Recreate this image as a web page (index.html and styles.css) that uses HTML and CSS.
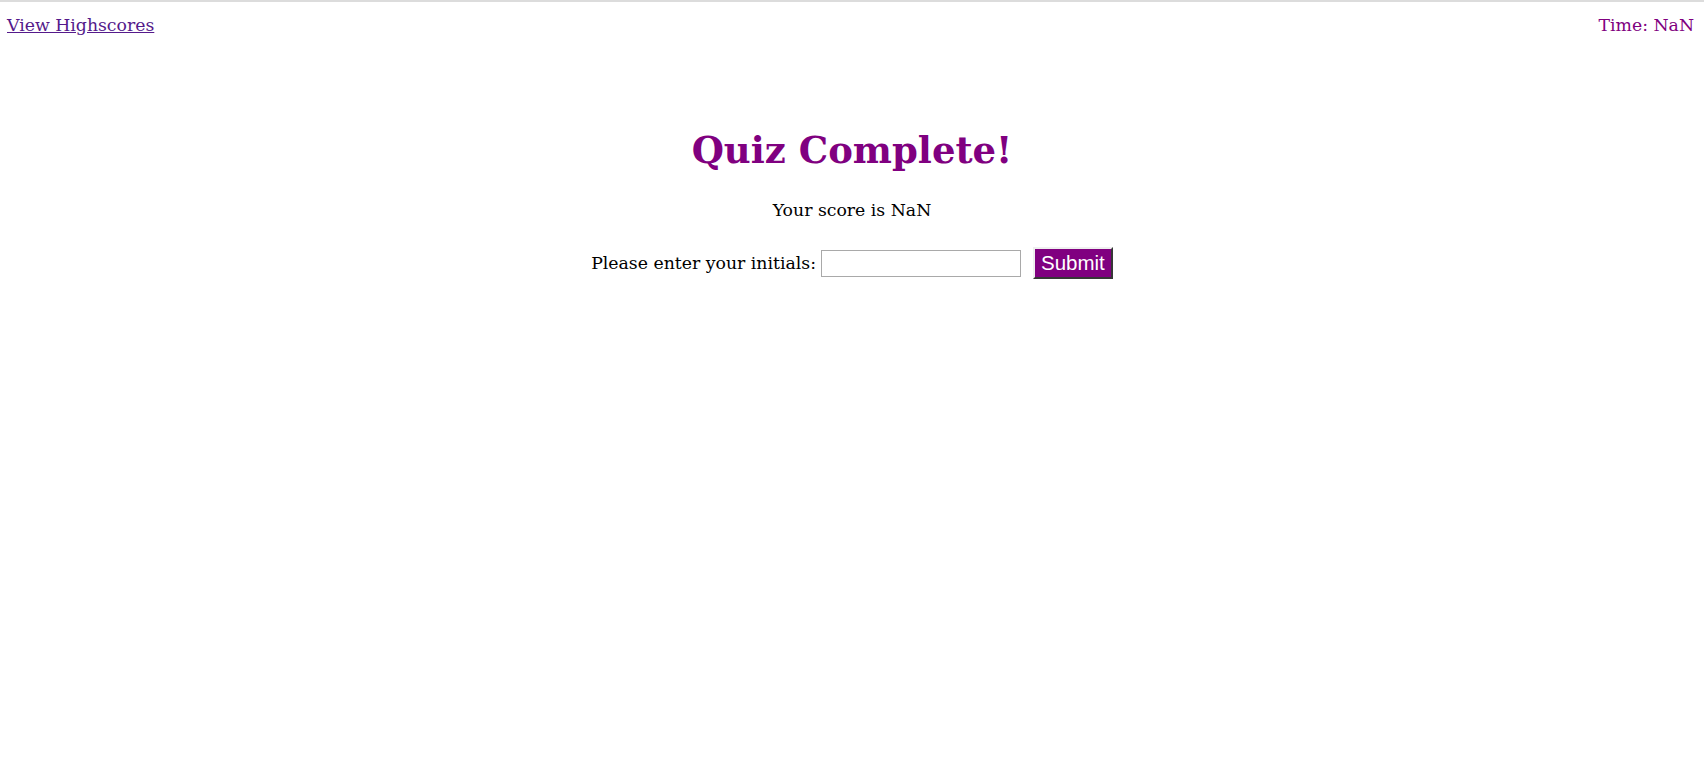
FILE: index.html
```html
<!DOCTYPE html>
<html>
<head>
<meta charset="utf-8">
<title>Quiz</title>
<link rel="stylesheet" href="styles.css">
</head>
<body>
<header class="topbar">
  <a class="highscores" href="#">View Highscores</a>
  <span class="timer">Time: NaN</span>
</header>
<main class="result">
  <h1 class="result-title">Quiz Complete!</h1>
  <p class="result-score">Your score is NaN</p>
  <form class="initials-form" onsubmit="return false;">
    <label class="initials-label" for="initials">Please enter your initials:</label>
    <input class="initials-input" id="initials" type="text">
    <button class="submit-btn" type="submit">Submit</button>
  </form>
</main>
</body>
</html>
```

FILE: styles.css
```css
html, body {
  margin: 0;
  padding: 0;
  background: #ffffff;
}
body {
  border-top: 2px solid #dcdcdc;
  font-family: "DejaVu Serif", Georgia, serif;
  font-size: 17.3px;
  color: #000;
}
.topbar {
  display: flex;
  justify-content: space-between;
  align-items: baseline;
  padding: 11px 10px 0 7px;
  line-height: 24px;
}
.highscores {
  color: #551a8b;
  text-decoration: underline;
}
.timer {
  color: #800080;
}
.result {
  text-align: center;
}
.result-title {
  margin: 89px 0 0;
  font-size: 37px;
  line-height: 48px;
  font-weight: bold;
  color: #800080;
}
.result-score {
  margin: 24px 0 0;
  line-height: 24px;
}
.initials-form {
  margin-top: 25px;
  display: flex;
  justify-content: center;
  align-items: center;
}
.initials-label {
  margin-right: 5px;
}
.initials-input {
  width: 200px;
  height: 27px;
  box-sizing: border-box;
  border: 1px solid #a9a9a9;
  padding: 1px 2px;
  margin: 0 12px 0 0;
  font-size: 16px;
}
.submit-btn {
  height: 32px;
  box-sizing: border-box;
  padding: 0 6px 0 6px;
  background: #800080;
  color: #ffffff;
  font-family: "Liberation Sans", Arial, sans-serif;
  font-size: 20.5px;
  border: 2px solid;
  border-color: #efefef #8b8b8b #8b8b8b #efefef;
  border-style: outset;
}
```
